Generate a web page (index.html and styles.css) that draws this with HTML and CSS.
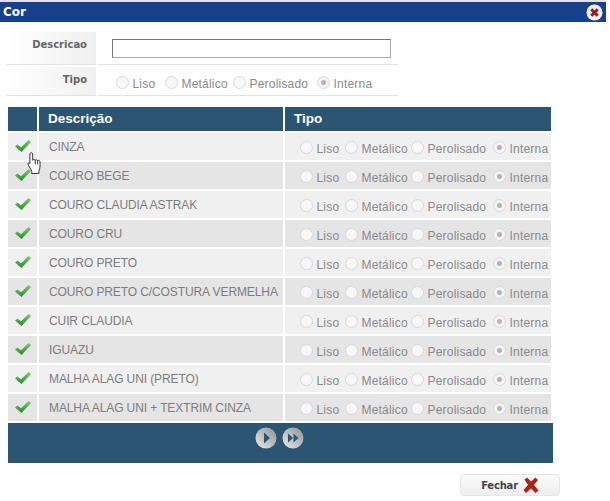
FILE: index.html
```html
<!DOCTYPE html>
<html lang="en">
<head>
    <meta charset="UTF-8">
    <meta name="viewport" content="width=device-width, initial-scale=1.0">
    <title>Cor</title>
    <link rel="stylesheet" href="styles.css">
</head>
<body>
    <div class="title-bar">
        <span>Cor</span>
        <svg class="close-icon" width="17" height="17" viewBox="0 0 17 17">
            <circle cx="8.500" cy="8.500" r="8" fill="#f3eee8"/>
            <path d="M5.300 5.300l6.400 6.400M11.700 5.300l-6.400 6.400" stroke="#8a1f22" stroke-width="3"/>
        </svg>
    </div>

    <div class="form">
        <div class="form-row first">
            <div class="form-label">Descricao</div>
            <div class="form-value"><input class="text-input" type="text"></div>
        </div>
        <div class="form-row second">
            <div class="form-label">Tipo</div>
            <div class="form-value radios">
                <label><input type="radio" disabled>Liso</label>
                <label><input type="radio" disabled>Metálico</label>
                <label><input type="radio" disabled>Perolisado</label>
                <label><input type="radio" disabled checked>Interna</label>
            </div>
        </div>
    </div>

    <svg class="defs" width="0" height="0">
        <defs>
            <linearGradient id="tickFill" x1="0" y1="0" x2="0" y2="1">
                <stop offset="0" stop-color="#7ccf6c"/>
                <stop offset="1" stop-color="#27892f"/>
            </linearGradient>
            <linearGradient id="ball" x1="1" y1="0" x2="0" y2="1">
                <stop offset="0" stop-color="#8d9296"/>
                <stop offset="1" stop-color="#ecebe8"/>
            </linearGradient>
        </defs>
    </svg>

    <div class="list">
        <div class="list-row head">
            <div></div>
            <div>Descrição</div>
            <div>Tipo</div>
        </div>
        <div class="list-row">
            <div class="check"><svg width="16" height="12" viewBox="0 0 16 12"><path class="tick" d="M0 6.500L2.500 4.500 6 7.300 13.500 0 16 2 6.500 12z"/></svg></div>
            <div class="name">CINZA</div>
            <div class="types"><label><input type="radio" disabled>Liso</label><label><input type="radio" disabled>Metálico</label><label><input type="radio" disabled>Perolisado</label><label><input type="radio" disabled checked>Interna</label></div>
        </div>
        <div class="list-row">
            <div class="check"><svg width="16" height="12" viewBox="0 0 16 12"><path class="tick" d="M0 6.500L2.500 4.500 6 7.300 13.500 0 16 2 6.500 12z"/></svg></div>
            <div class="name">COURO BEGE</div>
            <div class="types"><label><input type="radio" disabled>Liso</label><label><input type="radio" disabled>Metálico</label><label><input type="radio" disabled>Perolisado</label><label><input type="radio" disabled checked>Interna</label></div>
        </div>
        <div class="list-row">
            <div class="check"><svg width="16" height="12" viewBox="0 0 16 12"><path class="tick" d="M0 6.500L2.500 4.500 6 7.300 13.500 0 16 2 6.500 12z"/></svg></div>
            <div class="name">COURO CLAUDIA ASTRAK</div>
            <div class="types"><label><input type="radio" disabled>Liso</label><label><input type="radio" disabled>Metálico</label><label><input type="radio" disabled>Perolisado</label><label><input type="radio" disabled checked>Interna</label></div>
        </div>
        <div class="list-row">
            <div class="check"><svg width="16" height="12" viewBox="0 0 16 12"><path class="tick" d="M0 6.500L2.500 4.500 6 7.300 13.500 0 16 2 6.500 12z"/></svg></div>
            <div class="name">COURO CRU</div>
            <div class="types"><label><input type="radio" disabled>Liso</label><label><input type="radio" disabled>Metálico</label><label><input type="radio" disabled>Perolisado</label><label><input type="radio" disabled checked>Interna</label></div>
        </div>
        <div class="list-row">
            <div class="check"><svg width="16" height="12" viewBox="0 0 16 12"><path class="tick" d="M0 6.500L2.500 4.500 6 7.300 13.500 0 16 2 6.500 12z"/></svg></div>
            <div class="name">COURO PRETO</div>
            <div class="types"><label><input type="radio" disabled>Liso</label><label><input type="radio" disabled>Metálico</label><label><input type="radio" disabled>Perolisado</label><label><input type="radio" disabled checked>Interna</label></div>
        </div>
        <div class="list-row">
            <div class="check"><svg width="16" height="12" viewBox="0 0 16 12"><path class="tick" d="M0 6.500L2.500 4.500 6 7.300 13.500 0 16 2 6.500 12z"/></svg></div>
            <div class="name">COURO PRETO C/COSTURA VERMELHA</div>
            <div class="types"><label><input type="radio" disabled>Liso</label><label><input type="radio" disabled>Metálico</label><label><input type="radio" disabled>Perolisado</label><label><input type="radio" disabled checked>Interna</label></div>
        </div>
        <div class="list-row">
            <div class="check"><svg width="16" height="12" viewBox="0 0 16 12"><path class="tick" d="M0 6.500L2.500 4.500 6 7.300 13.500 0 16 2 6.500 12z"/></svg></div>
            <div class="name">CUIR CLAUDIA</div>
            <div class="types"><label><input type="radio" disabled>Liso</label><label><input type="radio" disabled>Metálico</label><label><input type="radio" disabled>Perolisado</label><label><input type="radio" disabled checked>Interna</label></div>
        </div>
        <div class="list-row">
            <div class="check"><svg width="16" height="12" viewBox="0 0 16 12"><path class="tick" d="M0 6.500L2.500 4.500 6 7.300 13.500 0 16 2 6.500 12z"/></svg></div>
            <div class="name">IGUAZU</div>
            <div class="types"><label><input type="radio" disabled>Liso</label><label><input type="radio" disabled>Metálico</label><label><input type="radio" disabled>Perolisado</label><label><input type="radio" disabled checked>Interna</label></div>
        </div>
        <div class="list-row">
            <div class="check"><svg width="16" height="12" viewBox="0 0 16 12"><path class="tick" d="M0 6.500L2.500 4.500 6 7.300 13.500 0 16 2 6.500 12z"/></svg></div>
            <div class="name">MALHA ALAG UNI (PRETO)</div>
            <div class="types"><label><input type="radio" disabled>Liso</label><label><input type="radio" disabled>Metálico</label><label><input type="radio" disabled>Perolisado</label><label><input type="radio" disabled checked>Interna</label></div>
        </div>
        <div class="list-row">
            <div class="check"><svg width="16" height="12" viewBox="0 0 16 12"><path class="tick" d="M0 6.500L2.500 4.500 6 7.300 13.500 0 16 2 6.500 12z"/></svg></div>
            <div class="name">MALHA ALAG UNI + TEXTRIM CINZA</div>
            <div class="types"><label><input type="radio" disabled>Liso</label><label><input type="radio" disabled>Metálico</label><label><input type="radio" disabled>Perolisado</label><label><input type="radio" disabled checked>Interna</label></div>
        </div>
    </div>

    <div class="pager">
        <svg width="22" height="22" viewBox="0 0 22 22">
            <circle cx="11" cy="11" r="10.500" fill="url(#ball)"/>
            <path d="M9 5.500l6 5.500-6 5.500z" fill="#2b5572"/>
        </svg>
        <svg width="22" height="22" viewBox="0 0 22 22">
            <circle cx="11" cy="11" r="10.500" fill="url(#ball)"/>
            <path d="M6 6.500l5 4.500-5 4.500zM11.500 6.500l5 4.500-5 4.500z" fill="#2b5572"/>
        </svg>
    </div>

    <div class="actions">
        <button class="close-btn">Fechar
            <svg width="16" height="16" viewBox="0 0 16 16"><path d="M1.500 2.500L4 .5l4 4 4.500-4L15 3l-4 5 4.500 5.500L12.500 16 8 11.500 3 16 .5 13l4.500-5z" fill="#a8241c"/></svg>
        </button>
    </div>

    <!-- mouse pointer over the first row -->
    <svg class="hand" width="17" height="22" viewBox="0 0 16 24">
        <path d="M3 2c.4-1.600 2.600-1.600 3 0v7c.5-1 2.300-1 2.800 0 .6-.8 2.200-.8 2.600.3.800-.5 2.400-.2 2.600 1.200v5.500c0 2-.5 3-1.200 4.500v3H5v-2.500L1.200 14c-1-1.500.5-3 1.800-1.500z" fill="#fff" stroke="#222" stroke-width="1"/>
        <path d="M8.800 9v4.500M11.400 9.300v4.200" stroke="#222" stroke-width="1" fill="none"/>
    </svg>
</body>
</html>
```

FILE: styles.css
```css
body {
    margin: 0;
    background-color: #fff;
    font-family: "Liberation Sans", Arial, sans-serif;
    font-size: 12px;
    color: #7d7d7d;
}

/* title */
.title-bar {
    display: flex;
    align-items: center;
    justify-content: space-between;
    width: 603px;
    height: 20px;
    padding-left: 3px;
    border-top: 2px solid #e2e2e2;
    background-color: #17418a;
    color: #fff;
    font-family: "DejaVu Sans", Verdana, sans-serif;
    font-size: 12px;
    font-weight: bold;
}
.close-icon {
    margin-right: 3px;
}

/* search form */
.form {
    margin: 10px 0 0 6px;
    width: 392px;
}
.form-row {
    display: flex;
    gap: 2px;
}
.form-row.first {
    height: 33px;
}
.form-row.second {
    height: 31px;
}
.form-label {
    box-sizing: border-box;
    width: 90px;
    padding: 7px 9px 0 0;
    background: linear-gradient(to right, #fff, #f0f0f0);
    border-bottom: 1px solid #e2e2e2;
    text-align: right;
    font-family: "DejaVu Sans", Verdana, sans-serif;
    font-size: 10px;
    font-weight: bold;
    color: #666;
}
.second .form-label {
    margin-top: 2px;
}
.form-value {
    flex: 1;
    padding: 7px 0 0 14px;
    border-bottom: 1px solid #e2e2e2;
}
.text-input {
    display: block;
    box-sizing: border-box;
    width: 279px;
    height: 19px;
    margin: 0;
    padding: 0;
    border: 1px solid #aaa;
    border-top-color: #777;
    border-left-color: #777;
}
.form-value.radios {
    display: grid;
    grid-template-columns: 49px 68px 84px auto;
    padding: 10px 0 0 18px;
}

label {
    display: flex;
    align-items: center;
    height: 18px;
    letter-spacing: 0.2px;
    color: #8a8a8a;
}
input[type="radio"] {
    appearance: none;
    flex-shrink: 0;
    box-sizing: border-box;
    width: 13px;
    height: 13px;
    margin: 0 3.5px 3px 0;
    border: 1px solid #d8d8d8;
    border-radius: 50%;
    background: #f7f7f7;
}
input[type="radio"]:checked {
    background: radial-gradient(circle, #b4b4b4 0, #b4b4b4 2px, #f4f4f4 3px);
}

/* grid */
.defs {
    position: absolute;
}
.list {
    display: flex;
    flex-direction: column;
    gap: 2px;
    margin: 11px 0 0 8px;
    width: 543px;
}
.list-row {
    display: grid;
    grid-template-columns: 29px 244px 266px;
    gap: 2px;
    height: 27px;
}
.list-row > div {
    background-color: #f0f0f0;
}
.list-row:nth-child(odd) > div {
    background-color: #e5e5e5;
}
.list-row.head {
    height: 24px;
}
.list-row.head > div {
    padding-left: 9px;
    background-color: #2b5572;
    color: #fff;
    font-size: 13.5px;
    font-weight: bold;
    line-height: 24px;
}
.check {
    display: flex;
    align-items: center;
    justify-content: center;
    padding-bottom: 2px;
}
.tick {
    fill: url(#tickFill);
}
.list-row > .name {
    padding: 2px 0 0 10px;
    line-height: 25px;
    letter-spacing: -0.1px;
    white-space: nowrap;
}
.list-row > .types {
    display: grid;
    grid-template-columns: 45px 66px 82px auto;
    align-items: center;
    padding: 5px 0 0 15px;
}

/* pager */
.pager {
    display: flex;
    justify-content: center;
    gap: 5px;
    box-sizing: border-box;
    width: 545px;
    height: 40px;
    margin: 2px 0 0 8px;
    padding: 4px 2px 0 0;
    background-color: #2b5572;
}

.actions {
    display: flex;
    justify-content: flex-end;
    width: 560px;
    margin-top: 11px;
}
.close-btn {
    display: flex;
    align-items: center;
    justify-content: center;
    gap: 5px;
    width: 100px;
    height: 22px;
    padding: 0;
    border: 1px solid #e6e6e6;
    border-radius: 4px;
    background: linear-gradient(to bottom, #fafafa, #eee);
    font-family: "DejaVu Sans", Verdana, sans-serif;
    font-size: 10px;
    font-weight: bold;
    letter-spacing: -0.2px;
    color: #444;
}

.hand {
    position: absolute;
    left: 26px;
    top: 152px;
}
```
